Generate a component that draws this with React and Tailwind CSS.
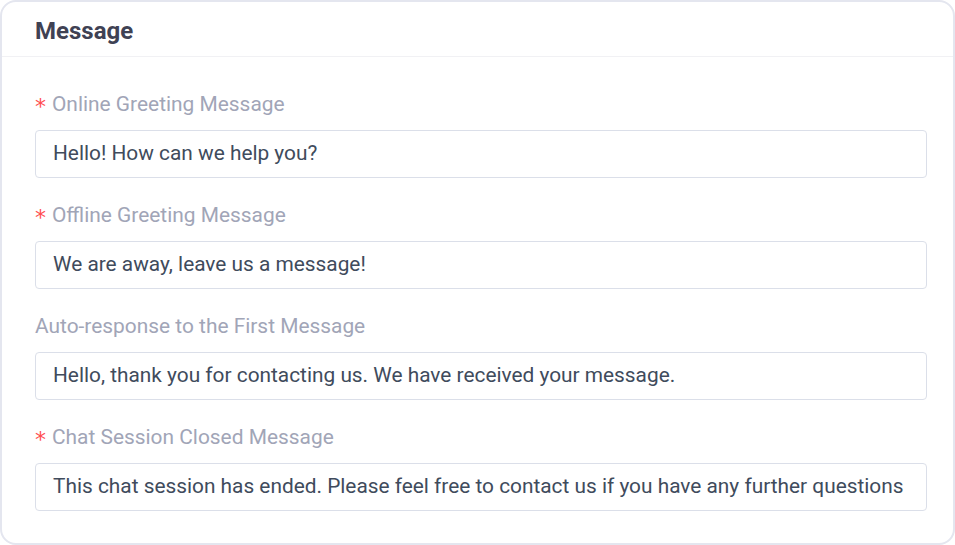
import React from "react";

const fields = [
  { label: "Online Greeting Message", required: true, value: "Hello! How can we help you?" },
  { label: "Offline Greeting Message", required: true, value: "We are away, leave us a message!" },
  {
    label: "Auto-response to the First Message",
    required: false,
    value: "Hello, thank you for contacting us. We have received your message.",
  },
  {
    label: "Chat Session Closed Message",
    required: true,
    value: "This chat session has ended. Please feel free to contact us if you have any further questions",
  },
];

export default function App() {
  return (
    <div
      className="w-[955px] h-[545px] bg-white"
      style={{ fontFamily: "Roboto, 'Liberation Sans', sans-serif" }}
    >
      <div className="h-full border-2 border-[#e4e6ef] rounded-[16px] flex flex-col">
        <div className="h-[55px] border-b border-[#f1f1f4] px-[33px] flex items-center">
          <h2 className="text-[24px] font-bold text-[#3f4254] leading-none mt-[3px]">Message</h2>
        </div>
        <div className="pl-[33px] pr-[26px] pt-[35px] flex flex-col gap-[25px]">
          {fields.map((f) => (
            <div key={f.label} className="flex flex-col gap-[14px]">
              <label className="flex items-center h-[24px] text-[20.9px] leading-[24px] text-[#a1a5b7]">
                {f.required && (
                  <span className="text-[#ff4d4f] w-[17px] text-[22px] font-['DejaVu_Sans',sans-serif] font-normal mt-[5px]">
                    *
                  </span>
                )}
                {f.label}
              </label>
              <div className="h-[48px] border border-[#dbdfe9] rounded-[4px] px-[17px] flex items-center text-[20.85px] text-[#404b5c] whitespace-nowrap overflow-hidden">
                {f.value}
              </div>
            </div>
          ))}
        </div>
      </div>
    </div>
  );
}
